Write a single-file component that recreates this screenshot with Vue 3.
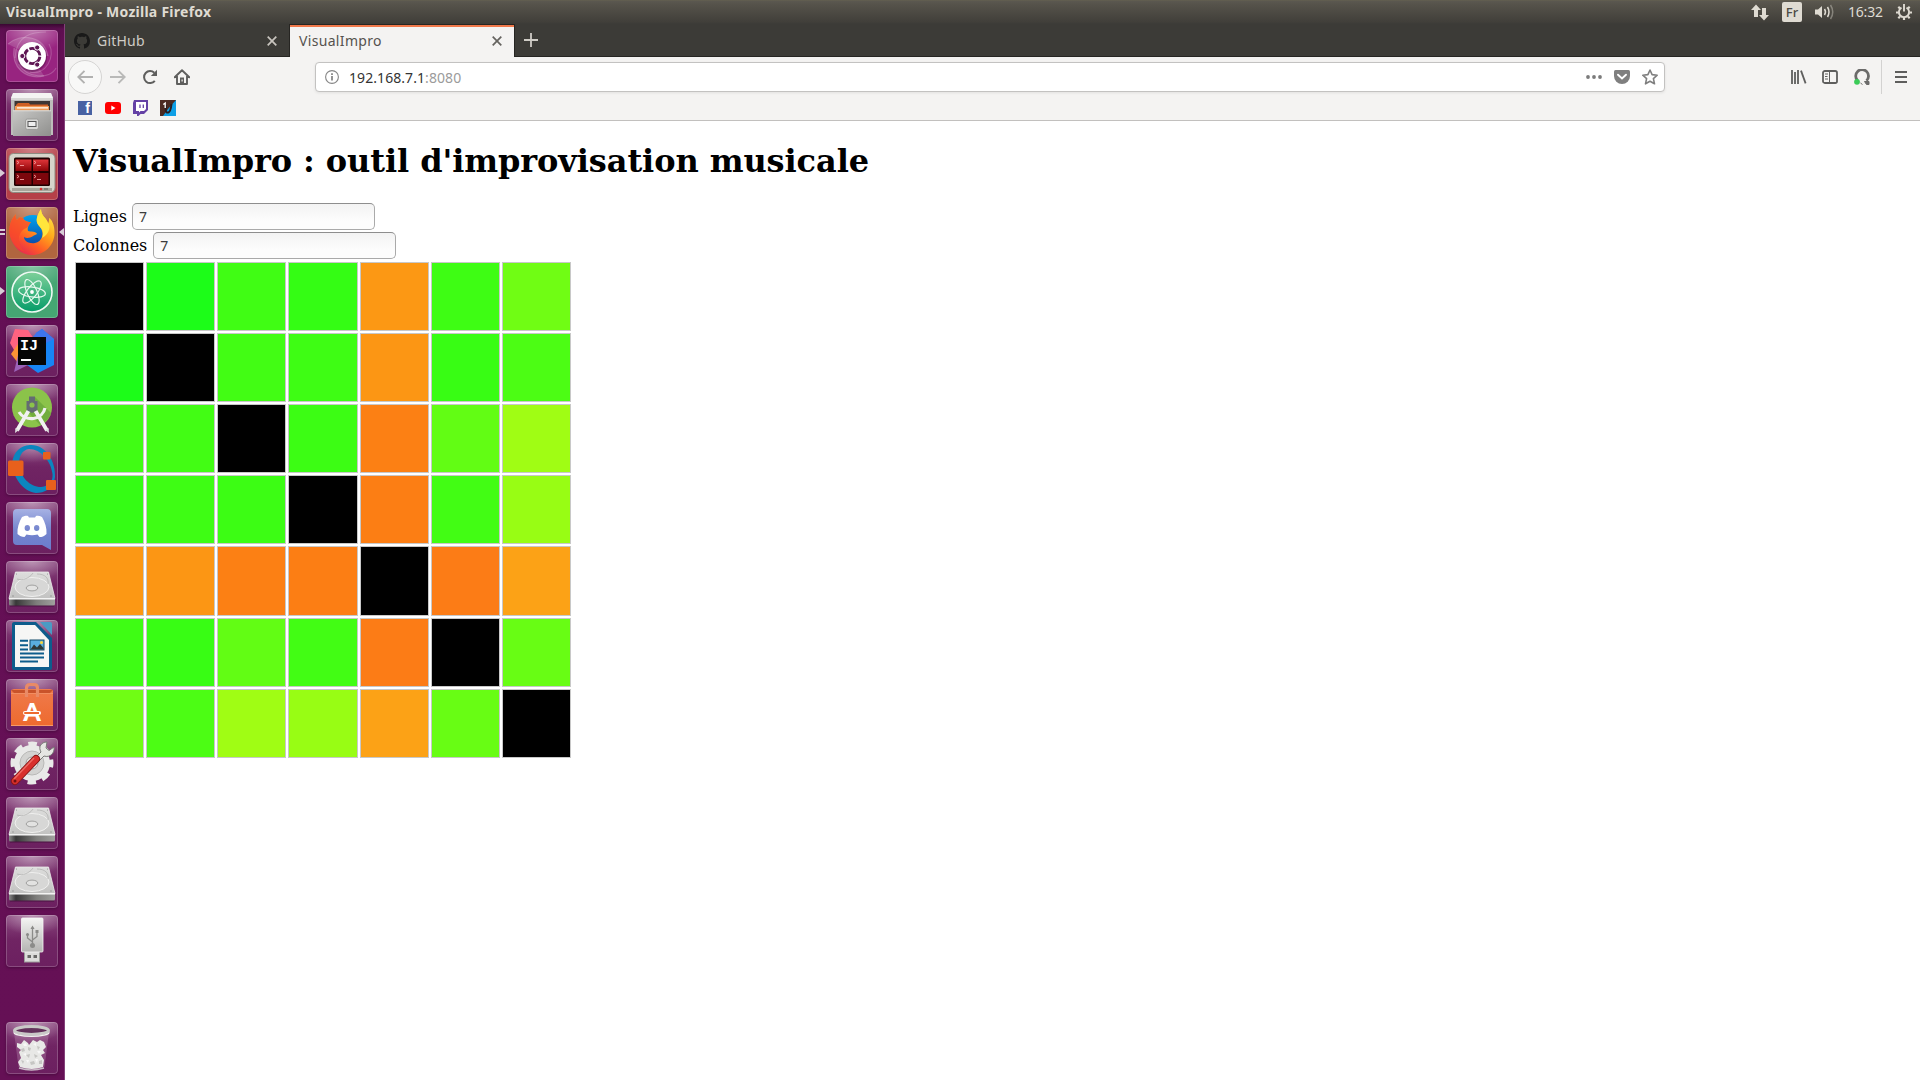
<script setup>
import { ref } from 'vue'

const rows = ref(7)
const cols = ref(7)

const k = '#000000'
const matrix = [
  [k, '#1cfd18', '#40fd14', '#34fd14', '#fc9814', '#3efd14', '#70fd14'],
  ['#1cfd18', k, '#42fd14', '#3efd14', '#fc9614', '#38fd14', '#4cfd14'],
  ['#40fd14', '#42fd14', k, '#3cfd14', '#fc8014', '#62fd14', '#a0fd14'],
  ['#34fd14', '#3efd14', '#3cfd14', k, '#fc7e14', '#42fd14', '#98fd14'],
  ['#fc9814', '#fc9614', '#fc8014', '#fc7e14', k, '#fc7c16', '#fca216'],
  ['#3efd14', '#38fd14', '#62fd14', '#42fd14', '#fc7c16', k, '#68fd14'],
  ['#70fd14', '#4cfd14', '#a0fd14', '#98fd14', '#fca216', '#68fd14', k],
]

const apps = [
  { icon: 'dash', tint: 'dash' },
  { icon: 'files', tint: 'plain' },
  { icon: 'terminal', tint: 'red', left: 1 },
  { icon: 'firefox', tint: 'orange', left: 2, active: true },
  { icon: 'atom', tint: 'green', left: 1 },
  { icon: 'idea', tint: 'plain', letters: 'IJ' },
  { icon: 'studio', tint: 'plain' },
  { icon: 'octave', tint: 'plain' },
  { icon: 'discord', tint: 'plain' },
  { icon: 'disk', tint: 'plain' },
  { icon: 'writer', tint: 'plain' },
  { icon: 'software', tint: 'plain', letters: 'A' },
  { icon: 'settings', tint: 'plain' },
  { icon: 'disk', tint: 'plain' },
  { icon: 'disk', tint: 'plain' },
  { icon: 'usb', tint: 'plain' },
  { icon: 'trash', tint: 'plain', last: true },
]
</script>

<template>
  <div class="desktop">
    <svg class="defs" width="0" height="0">
      <defs>
        <linearGradient id="gMetal" x1="0" y1="0" x2="0" y2="1"><stop offset="0" stop-color="#f4f4f3" /><stop offset="1" stop-color="#b4b4b2" /></linearGradient>
        <linearGradient id="gFront" x1="0" y1="0" x2="1" y2="1"><stop offset="0" stop-color="#c9c9c7" /><stop offset="1" stop-color="#8f8f8d" /></linearGradient>
        <linearGradient id="gScreen" x1="0" y1="0" x2="0" y2="1"><stop offset="0" stop-color="#e0363a" /><stop offset="1" stop-color="#8c0408" /></linearGradient>
        <linearGradient id="gFox" x1=".9" y1="0" x2=".2" y2="1"><stop offset="0" stop-color="#fff04a" /><stop offset=".4" stop-color="#ffa81a" /><stop offset=".7" stop-color="#ff5a26" /><stop offset="1" stop-color="#e0205a" /></linearGradient>
        <linearGradient id="gGlobe" x1="0" y1="0" x2="0" y2="1"><stop offset="0" stop-color="#00a4f0" /><stop offset="1" stop-color="#10389a" /></linearGradient>
        <linearGradient id="gAtom" x1="0" y1="0" x2="0" y2="1"><stop offset="0" stop-color="#7fd09a" /><stop offset="1" stop-color="#049c68" /></linearGradient>
        <linearGradient id="gDisk" x1="0" y1="0" x2="0" y2="1"><stop offset="0" stop-color="#dededd" /><stop offset="1" stop-color="#c2c2c1" /></linearGradient>
        <linearGradient id="gEdge" x1="0" y1="0" x2="1" y2="0"><stop offset="0" stop-color="#8a8a8a" /><stop offset=".15" stop-color="#383838" /><stop offset=".6" stop-color="#7e7e7c" /><stop offset="1" stop-color="#a0a09e" /></linearGradient>
        <linearGradient id="gDiscord" x1="0" y1="0" x2="0" y2="1"><stop offset="0" stop-color="#a7b2e4" /><stop offset=".5" stop-color="#7686ce" /><stop offset="1" stop-color="#6a7ccc" /></linearGradient>
        <linearGradient id="gBag" x1="0" y1="0" x2="0" y2="1"><stop offset="0" stop-color="#ef7a4c" /><stop offset="1" stop-color="#ee6a2e" /></linearGradient>
      </defs>

      <symbol id="dash" viewBox="0 0 52 52">
        <g fill="none" stroke="#fff" stroke-opacity=".2" stroke-width="1.1">
          <path d="M2 14C14 3 38 5 42 26" /><path d="M40 2C28 2 10 4 9 28" /><path d="M8 18C5 38 20 50 38 46" /><path d="M50 38C44 50 20 48 13 34" /><path d="M43 14C50 26 40 46 24 42" />
        </g>
        <path d="M2 14C14 3 38 5 42 26L26 26ZM8 18C5 38 20 50 38 46L26 26Z" fill="#fff" opacity=".14" />
        <circle cx="26" cy="27" r="15" fill="#3b0634" opacity=".35" />
        <circle cx="26" cy="26" r="14" fill="#fff" />
        <circle cx="26.3" cy="26" r="7.6" fill="none" stroke="#5e1653" stroke-width="2.9" stroke-dasharray="14.300 1.617" stroke-dashoffset="-.800" />
        <g fill="#5e1653" stroke="#fff" stroke-width="1"><circle cx="16.300" cy="26" r="2.600" /><circle cx="31.200" cy="17.500" r="2.600" /><circle cx="31.200" cy="34.600" r="2.600" /></g>
      </symbol>

      <symbol id="files" viewBox="0 0 52 52">
        <path d="M7 4H45L47 9V46H5V9Z" fill="#bdbdbb" />
        <path d="M7 4H45L47 9H5Z" fill="#f4f4f3" />
        <rect x="5" y="9" width="42" height="2" fill="#d8d8d6" />
        <rect x="8.500" y="12" width="35.500" height="12" fill="#3d3634" />
        <path d="M10 16L12 14H23L24 15.500H42V24H10Z" fill="#cf5f24" />
        <path d="M9 17H43V24H9Z" fill="#f09a55" /><path d="M11 18.300H42V19.600H11Z" fill="#fff" />
        <path d="M7 21.500H24L26 20.500L28 21.500H45V47H7Z" fill="url(#gFront)" />
        <path d="M7 21.800H45" stroke="#dededc" />
        <rect x="19.500" y="30" width="13" height="10.500" rx="2" fill="#d8d8d6" stroke="#949492" stroke-width=".8" />
        <rect x="22" y="32.500" width="8" height="5" fill="#eee" stroke="#555" />
      </symbol>

      <symbol id="terminal" viewBox="0 0 52 52">
        <rect x="3" y="5.500" width="46" height="39" rx="4.500" fill="#d6d4ca" stroke="#8d8a80" />
        <path d="M6 41.500H46" stroke="#a8a59b" stroke-width="3" />
        <rect x="8" y="9.500" width="36" height="28.500" rx="1.500" fill="#200002" />
        <g fill="url(#gScreen)"><rect x="9.500" y="11.500" width="16" height="11.500" /><rect x="27" y="11.500" width="15.500" height="11.500" /></g>
        <g fill="#7c060c"><rect x="9.500" y="25" width="16" height="11.500" /><rect x="27" y="25" width="15.500" height="11.500" /></g>
        <g fill="none" stroke="#f4a0a0" stroke-width=".9"><path d="M11 13l2 1.500-2 1.500M14 17.500h4M28 13l2 1.500-2 1.500M31 17.500h4M11 27l2 1.500-2 1.500M14 31.500h4M28 27l2 1.500-2 1.500M31 31.500h4" /></g>
        <circle cx="35" cy="41" r="1.300" fill="#e03030" /><path d="M38 41H42" stroke="#77746c" stroke-width="1.500" />
      </symbol>

      <symbol id="firefox" viewBox="0 0 52 52">
        <circle cx="27" cy="26" r="18" fill="url(#gGlobe)" />
        <path d="M35 2C30 10 29 15 34 20C39 26 36 35 29 36C23 37 18 34 18 30C23 33 28 28 31 27C30 24 25 25 22 24C21 20 23 18 25 15C20 15 18 13 17 11C13 9 12 12 11 13C10 12 9 10 10 7C5 12 2 20 4 29C7 40 15 48 26 48C39 48 48 38 48.500 27C49 17 45 12 43 11C43 14 43 15 42 16C40 10 35 9 35 2Z" fill="url(#gFox)" />
        <path d="M35 2C30 10 29 15 34 20C37 23 38 27 36 31C44 27 45 18 42 16C40 10 35 9 35 2Z" fill="#ffe53c" />
        <path d="M10 7C5 12 2 20 4 29C7 38 13 43 19 45C12 38 10 28 18 22C22 21 23 18 25 15C20 15 18 13 17 11C13 9 12 12 11 13C10 12 9 10 10 7Z" fill="#f5472c" opacity=".75" />
      </symbol>

      <symbol id="atom" viewBox="0 0 52 52">
        <circle cx="26" cy="26" r="20" fill="url(#gAtom)" stroke="#f0faf4" stroke-width="1.600" />
        <g fill="none" stroke="#e6f8ee" stroke-width="1.200"><ellipse cx="26" cy="26" rx="5" ry="13.500" transform="rotate(-24 26 26)" /><ellipse cx="26" cy="26" rx="5" ry="13.500" transform="rotate(38 26 26)" /><ellipse cx="26" cy="26" rx="5" ry="13.500" transform="rotate(98 26 26)" /></g>
        <circle cx="26" cy="26" r="1.900" fill="#fff" />
      </symbol>

      <symbol id="idea" viewBox="0 0 52 52">
        <path d="M9 4L22 5L28 14L12 32L4 18Z" fill="#fe6380" />
        <path d="M5 29L12 19V38Z" fill="#fc9435" />
        <path d="M12 30L26 38L8 47Z" fill="#9b62b8" />
        <path d="M30 8L36 4L48 14V40L32 48L21 40L40 12Z" fill="#1785f5" />
        <path d="M30 8L36 4L48 14L40 18L27 12Z" fill="#3e75ec" />
        <rect x="12" y="12" width="28" height="28" fill="#060606" />
        <rect x="15" y="34" width="10" height="2" fill="#fff" />
      </symbol>

      <symbol id="studio" viewBox="0 0 52 52">
        <circle cx="26" cy="23.500" r="20" fill="#8bc34a" />
        <path d="M29 13L45 29A20 20 0 0 1 34 41L22 28Z" fill="#5f9b34" opacity=".55" />
        <g fill="none" stroke="#f1f1f1" stroke-linecap="butt"><path d="M23 26L11 46.500M29 26L41 46.500" stroke-width="3.800" /><path d="M13 28A14 13 0 0 0 39 24" stroke-width="3.200" /></g>
        <path d="M9.500 44L9 49L13 46ZM42.500 44L43 49L39 46Z" fill="#ddd" />
        <path d="M23 12.500H29V17H31.500V26L26 29L20.500 26V17H23Z" fill="#646c72" />
        <circle cx="26" cy="21" r="2.600" fill="#8bc34a" />
      </symbol>

      <symbol id="octave" viewBox="0 0 52 52">
        <path fill-rule="evenodd" d="M24 2C39 1 50 18 49 34C48 46 38 50 30 50C16 48 7 34 6 20C8 8 14 3 24 2ZM23 6C16 7 13 13 13 21C14 34 24 44 35 44C44 43 47 38 46.500 31C45 18 35 6 23 6Z" fill="#0b85bf" />
        <g fill="#e8601c"><rect x="2" y="17.500" width="15.500" height="15.500" rx="1.500" /><rect x="37" y="9" width="7.500" height="7.500" rx="1" /><rect x="40" y="37" width="10" height="10" rx="1" /></g>
      </symbol>

      <symbol id="discord" viewBox="0 0 52 52">
        <path d="M11 7H41A4 4 0 0 1 45 11V48L36 43H11A4 4 0 0 1 7 39V11A4 4 0 0 1 11 7Z" fill="url(#gDiscord)" />
        <path fill-rule="evenodd" d="M16 15C19 13.500 21 13.500 22 14L23 15.500H29L30 14C32 13.500 34 14 36 15C39 20 41 26 40.500 32C38 34.500 36 35 33.500 35L31.500 32.500C28 33.500 24 33.500 20.500 32.500L18.500 35C16 35 13.500 34 11.500 32C11 26 13 20 16 15ZM21.300 23A2.600 2.900 0 1 0 21.300 29A2.600 2.900 0 1 0 21.300 23ZM30.700 23A2.600 2.900 0 1 0 30.700 29A2.600 2.900 0 1 0 30.700 23Z" fill="#fff" />
      </symbol>

      <symbol id="disk" viewBox="0 0 52 52">
        <path d="M4 44.500H48" stroke="#35082f" stroke-width="2" opacity=".6" />
        <path d="M3 37H49V43Q49 44.500 47.500 44.500H4.500Q3 44.500 3 43Z" fill="url(#gEdge)" />
        <path d="M9.500 11H42.500L49 37.500H3Z" fill="url(#gDisk)" stroke="#ececeb" stroke-width=".8" />
        <path d="M3 37.800H49" stroke="#fafafa" stroke-width="1.200" />
        <ellipse cx="26" cy="26" rx="17" ry="9.500" fill="#d7d7d6" stroke="#f0f0ef" stroke-width="1" />
        <path d="M11 18C16 20 24 17 27 12M31 13C39 13 43 17 42 23" fill="none" stroke="#b4b4b3" stroke-width=".8" />
        <ellipse cx="26" cy="27" rx="5.800" ry="2.900" fill="#e2e2e1" stroke="#9a9a99" stroke-width=".9" />
        <g fill="#8f8f8e"><circle cx="10.500" cy="13" r=".6" /><circle cx="41.500" cy="13" r=".6" /><circle cx="7" cy="35" r=".7" /><circle cx="45" cy="35" r=".7" /></g>
      </symbol>

      <symbol id="writer" viewBox="0 0 52 52">
        <path d="M8 2H30L46 18V48Q46 50 44 50H8Q6 50 6 48V4Q6 2 8 2Z" fill="#0d5c8c" />
        <path d="M34 2H44Q46 2 46 4V15Z" fill="#4b9bc4" />
        <path d="M9 5H29L43 20V47H9Z" fill="#f6f6f5" />
        <path d="M14 20.800H22M14 25.200H22M14 29.600H22M14 33.500H38M14 37.500H38M14 41.500H32" stroke="#0d5c8c" stroke-width="2" />
        <rect x="24" y="20" width="14" height="10" fill="#5aaede" stroke="#124a6b" /><path d="M24.500 29.500L28 24.500L31 27.500L34 24L37.500 28V29.500Z" fill="#2f3a36" /><circle cx="35.500" cy="22.500" r="1.500" fill="#f5d53d" />
      </symbol>

      <symbol id="software" viewBox="0 0 52 52">
        <path d="M5 11L8 10H44L47 11V47H5Z" fill="url(#gBag)" />
        <path d="M5 11H47L44 14H8Z" fill="#c9532a" /><path d="M5 14.500H47" stroke="#f39468" stroke-width=".8" />
        <path d="M20.500 18V9Q20.500 5.500 24 5.500H28Q31.500 5.500 31.500 9V18" fill="none" stroke="#e98a66" stroke-width="3.200" />
        <path d="M5 46.500H47" stroke="#f79a66" />
      </symbol>

      <symbol id="settings" viewBox="0 0 52 52">
        <circle cx="26" cy="25" r="19" fill="none" stroke="#e9e9e8" stroke-width="5" stroke-dasharray="8.500 6.423" stroke-dashoffset="4.250" />
        <circle cx="26" cy="25" r="18" fill="#e9e9e8" /><circle cx="26" cy="25" r="12" fill="#d3d3d1" stroke="#b9b9b7" /><circle cx="26" cy="25" r="6" fill="#e4e4e2" stroke="#a0a09e" />
        <path d="M25 24L35 14C32 9 35 4 41 4L40 10L43 12.500L48 9C49 15 44 20 38 18L28 28Z" fill="#e6e6e3" stroke="#787876" />
        <path d="M9 43L30 21" stroke="#871616" stroke-width="8" stroke-linecap="round" /><path d="M9 43L30 21" stroke="#d8302c" stroke-width="6.200" stroke-linecap="round" /><path d="M8 41L28 20" stroke="#ee6a62" stroke-width="1.500" />
        <circle cx="9" cy="43" r="1.500" fill="#701010" />
      </symbol>

      <symbol id="usb" viewBox="0 0 52 52">
        <rect x="18.500" y="36" width="15" height="11" fill="#dcdcda" stroke="#9d9d9b" /><path d="M21.500 40h3.500v3h-3.500zM27.500 40h3.500v3h-3.500z" fill="#686866" />
        <rect x="15.500" y="3" width="21.500" height="34" rx="1" fill="url(#gMetal)" stroke="#f6f6f5" stroke-width=".8" />
        <g fill="none" stroke="#8b8b89" stroke-width="1.300"><path d="M26.500 31V12M26.500 27L21.500 23V20M26.500 25L31 21.500V17" /></g>
        <g fill="#8b8b89"><circle cx="26.500" cy="30.500" r="2.500" /><circle cx="21.500" cy="19.500" r="1.500" /><rect x="29.500" y="15" width="3" height="3" /><path d="M24.500 14L26.500 10.500L28.500 14Z" /></g>
      </symbol>

      <symbol id="trash" viewBox="0 0 52 52">
        <path d="M8 10L12.500 45Q25.500 50 38.500 45L43 10Z" fill="#d6b6d0" opacity=".25" />
        <path d="M11 21L15 22L18 18L22 21L23 23L27 18L31 20L34 18L38 20L40 25L37 28L39 31L35 33L38 38L37 45Q26 49 14 45L12 40L15 36L13 30L15 28L11 25Z" fill="#e8e8e6" />
        <g fill="#c6c6c3"><path d="M15 27l3-1 1 3-3 1zM22 25l3 1-1 3-2-1zM31 24l3 1-2 3zM20 33l4-1-1 4zM28 32l4 2-3 2zM15 38l3 1-1 3zM24 40l4-1 1 3-4 1zM33 39l3-1 0 4-3 0z" /></g>
        <g fill="#f8f8f7"><path d="M17 22l3-1 1 3-3 0zM27 22l3-1 0 3zM17 32l3-1 0 3zM31 29l4 0-2 3zM20 38l3 0-1 3zM29 37l3 0-1 4z" /></g>
        <ellipse cx="25.500" cy="8.500" rx="17" ry="4" fill="#3c0b36" fill-opacity=".6" stroke="#c9c9c7" stroke-width="3" />
        <path d="M7.500 9A18 5 0 0 0 43.500 9V11A18 4 0 0 1 7.500 11Z" fill="#f2f2f0" />
        <path d="M13 46Q25.500 50 38 46" fill="none" stroke="#c9b9c6" stroke-width="1.500" />
      </symbol>
    </svg>

    <header class="panel">
      <span class="window-title">VisualImpro - Mozilla Firefox</span>
      <div class="indicators">
        <svg class="net" width="18" height="17" viewBox="0 0 18 17"><path d="M5 0.500L10 6H7V13H3V6H0ZM13 16.500L8 11H11V4H15V11H18Z" fill="#dfdbd2" /></svg>
        <span class="lang">Fr</span>
        <svg class="vol" width="20" height="16" viewBox="0 0 20 16"><path d="M0 5.500H3L7 2V14L3 10.500H0Z" fill="#dfdbd2" /><g fill="none" stroke="#dfdbd2" stroke-width="1.500"><path d="M9.500 5Q11.500 8 9.500 11" /><path d="M12.500 3Q15.500 8 12.500 13" /><path d="M15.500 1Q20 8 15.500 15" opacity=".4" /></g></svg>
        <span class="clock">16:32</span>
        <svg class="cog" width="16" height="16" viewBox="0 0 16 16" fill="none" stroke="#dfdbd2"><path d="M5.500 3.600A5.100 5.100 0 1 0 10.500 3.600" stroke-width="1.900" /><path d="M8 0V7.500" stroke-width="1.900" /><path d="M0 8.500H2.500M13.500 8.500H16M8 13.500V16M2.300 2.800L4 4.500M13.700 2.800L12 4.500M2.300 14.200L4 12.500M13.700 14.200L12 12.500" stroke-width="2.200" /></svg>
      </div>
    </header>

    <div class="workspace">
      <aside class="launcher">
        <div v-for="(app, i) in apps" :key="i" class="slot" :class="{ last: app.last }">
          <div class="tile" :class="app.tint"><svg width="52" height="52"><use :href="'#' + app.icon" /></svg></div>
          <span v-if="app.letters" class="letters" :class="app.icon">{{ app.letters }}</span>
          <span v-if="app.left === 1" class="pip"></span>
          <span v-if="app.left === 2" class="pips"></span>
          <span v-if="app.active" class="arrow"></span>
        </div>
      </aside>

      <div class="browser">
        <div class="tabs">
          <div class="tab">
            <svg width="16" height="16" viewBox="0 0 16 16"><path fill="#191919" d="M8 0C3.580 0 0 3.580 0 8c0 3.540 2.290 6.530 5.470 7.590.4.070.55-.17.55-.38 0-.19-.01-.82-.01-1.490-2.010.37-2.530-.49-2.690-.94-.09-.23-.48-.94-.82-1.130-.28-.15-.68-.52-.01-.53.63-.01 1.080.58 1.230.82.72 1.210 1.870.87 2.330.66.07-.52.28-.87.51-1.070-1.780-.2-3.640-.89-3.640-3.950 0-.87.31-1.590.82-2.150-.08-.2-.36-1.020.08-2.120 0 0 .67-.21 2.200.82.64-.18 1.320-.27 2-.27s1.360.09 2 .27c1.530-1.040 2.200-.82 2.200-.82.44 1.100.16 1.920.08 2.120.51.56.82 1.270.82 2.150 0 3.070-1.870 3.750-3.650 3.950.29.25.54.73.54 1.480 0 1.070-.01 1.930-.01 2.200 0 .21.15.46.55.38A8.010 8.010 0 0 0 16 8c0-4.420-3.580-8-8-8z" /></svg>
            <span class="label github">GitHub</span>
            <svg class="close" width="10" height="10" viewBox="0 0 10 10"><path d="M.7.700L9.300 9.300M9.300.700L.7 9.300" stroke="#c9c5bf" stroke-width="1.700" /></svg>
          </div>
          <div class="tab active">
            <span class="label">VisualImpro</span>
            <svg class="close" width="10" height="10" viewBox="0 0 10 10"><path d="M.7.700L9.300 9.300M9.300.700L.7 9.300" stroke="#65635f" stroke-width="1.700" /></svg>
          </div>
          <svg class="plus" width="14" height="14" viewBox="0 0 14 14"><path d="M7 0V14M0 7H14" stroke="#cfccc6" stroke-width="1.800" /></svg>
        </div>

        <div class="nav">
          <span class="back"><svg width="16" height="14" viewBox="0 0 16 14"><path d="M16 7H1.500M7.500 .8L1.300 7L7.500 13.200" fill="none" stroke="#b1b1b0" stroke-width="1.900" /></svg></span>
          <svg class="fwd" width="16" height="14" viewBox="0 0 16 14"><path d="M0 7H14.500M8.500 .8L14.700 7L8.500 13.200" fill="none" stroke="#b9b9b8" stroke-width="1.900" /></svg>
          <svg class="reload" width="16" height="16" viewBox="0 0 16 16"><path d="M12.800 11.800A6 6 0 1 1 12.300 3.800" fill="none" stroke="#5e5e5d" stroke-width="2" /><path d="M15 .8V7H8.800Z" fill="#5e5e5d" /></svg>
          <svg class="home" width="16" height="16" viewBox="0 0 16 16"><path d="M.7 8.300L8 1.200L15.300 8.300M3 7V15H13V7" fill="none" stroke="#5e5e5d" stroke-width="1.900" stroke-linejoin="round" stroke-linecap="round" /><path d="M6 15V8.500H10V15Z" fill="#5e5e5d" /><rect x="7.500" y="10.500" width="1.200" height="2" fill="#f5f4f2" /></svg>
          <div class="urlbar">
            <svg width="14" height="14" viewBox="0 0 14 14"><circle cx="7" cy="7" r="6.400" fill="none" stroke="#858585" stroke-width="1.100" /><path d="M7 6V10.500M7 3.200V4.900" stroke="#6f6f6f" stroke-width="1.500" /></svg>
            <span class="url"><span class="host">192.168.7.1</span><span class="port">:8080</span></span>
            <svg class="dots" width="16" height="4" viewBox="0 0 16 4" fill="#7b7b7b"><circle cx="2" cy="2" r="1.900" /><circle cx="8" cy="2" r="1.900" /><circle cx="14" cy="2" r="1.900" /></svg>
            <svg class="pocket" width="16" height="14" viewBox="0 0 16 14"><path d="M1.500 0H14.500Q16 0 16 1.500V6A8 8 0 0 1 0 6V1.500Q0 0 1.500 0Z" fill="#7f7f7f" /><path d="M4 4.700L8 8.500L12 4.700" fill="none" stroke="#fff" stroke-width="1.900" stroke-linecap="round" /></svg>
            <svg class="star" width="16" height="16" viewBox="0 0 16 16"><path d="M8 1L10.100 5.600L15.200 6.200L11.400 9.600L12.500 14.800L8 12.200L3.500 14.800L4.600 9.600L.8 6.200L5.900 5.600Z" fill="none" stroke="#7f7f7f" stroke-width="1.600" stroke-linejoin="round" /></svg>
          </div>
          <svg class="library" width="16" height="14" viewBox="0 0 16 14"><path d="M1 0V14M4 2V14M7 0V14" stroke="#5e5e5d" stroke-width="1.800" /><path d="M10 .6L14.600 13.400" stroke="#5e5e5d" stroke-width="1.800" /></svg>
          <svg class="sidebar" width="16" height="14" viewBox="0 0 16 14" fill="none" stroke="#5e5e5d"><rect x="1" y="1" width="14" height="12" rx="1.800" stroke-width="1.800" /><path d="M7.500 1V13M3 4H6M3 6.500H5.500M3 9H6" stroke-width="1" /></svg>
          <svg class="ghost" width="16" height="16" viewBox="0 0 16 16"><path d="M3.500 11.500A6.400 6.400 0 1 1 12.500 11.700" fill="none" stroke="#6b6b6a" stroke-width="2.800" /><path d="M6.500 14L8.500 15.500M10.500 12.500H15V15.500H12.500Z" stroke="#6b6b6a" fill="#6b6b6a" stroke-width="1" /><circle cx="3" cy="12.800" r="2.900" fill="#3bcb58" /></svg>
          <span class="divider"></span>
          <svg class="menu" width="12" height="12" viewBox="0 0 12 12"><path d="M0 1H12M0 6H12M0 11H12" stroke="#5e5e5d" stroke-width="1.900" /></svg>
        </div>

        <div class="bookmarks">
          <span class="fb">f</span>
          <svg width="16" height="12" viewBox="0 0 16 12"><rect width="16" height="12" rx="3" fill="#f00" /><path d="M6.300 3.500L10.500 6L6.300 8.500Z" fill="#fff" /></svg>
          <svg class="twitch" width="15" height="16" viewBox="0 0 15 16"><path d="M1 0H15V10L11 14H7.500L5.500 16H4V14H0V3Z" fill="#6441a5" /><path d="M3 2H13V9L11 11H7.500L6 12.500V11H3Z" fill="#fff" /><path d="M7 4.500V8M10.300 4.500V8" stroke="#6441a5" stroke-width="1.300" /></svg>
          <svg width="16" height="16" viewBox="0 0 16 16"><rect width="16" height="16" fill="#4b2a22" /><path d="M16 0V16H3L8 9Z" fill="#0e9fe6" /><path d="M5.800 5V10.500Q6 13 8.300 12.500Q10.600 12 11.500 4" fill="none" stroke="#2a1d20" stroke-width="2" /><path d="M3.300 4.500L5.200 3V8" fill="none" stroke="#fff" stroke-width="1.300" /></svg>
        </div>

        <main class="page">
          <h1>VisualImpro : outil d'improvisation musicale</h1>
          <div class="field"><label for="rows">Lignes</label><input id="rows" v-model="rows" type="text" /></div>
          <div class="field"><label class="tight" for="cols">Colonnes</label><input id="cols" v-model="cols" type="text" /></div>
          <div class="matrix">
            <template v-for="(line, r) in matrix" :key="r">
              <div v-for="(color, c) in line" :key="c" class="cell" :style="{ backgroundColor: color }"></div>
            </template>
          </div>
        </main>
      </div>
    </div>
  </div>
</template>

<style>
body { margin: 0; overflow: hidden; }
</style>

<style scoped>
.desktop { width: 1920px; height: 1080px; display: flex; flex-direction: column; overflow: hidden; background: #fff; font-family: "Noto Sans", sans-serif; }
.defs { position: absolute; }
svg { display: block; flex: none; }

.panel { height: 24px; flex: none; display: flex; align-items: center; justify-content: space-between; background: linear-gradient(#66624f 0, #5b5850 1px, #55524a 5px, #413f3a 22px, #3c3b37); color: #dfdbd2; }
.window-title { margin-left: 6px; font-weight: 700; font-size: 14px; line-height: 24px; letter-spacing: .26px; white-space: nowrap; }
.indicators { display: flex; align-items: center; margin-right: 8px; }
.lang { width: 20px; height: 20px; margin: 0 13px; border-radius: 2px; background: #dfdbd2; color: #4c4a44; font-size: 13px; font-weight: 500; line-height: 20px; text-align: center; }
.clock { width: 35px; margin: 0 13px; font-size: 14px; line-height: 24px; letter-spacing: -.2px; white-space: nowrap; }

.workspace { flex: 1; display: flex; min-height: 0; }
.launcher { width: 64px; flex: none; display: flex; flex-direction: column; padding-top: 6px; background: linear-gradient(#3a0832 0, #5d0f50 5px, #640f55 20px, #651055); border-right: 1px solid #84417a; }
.slot { position: relative; height: 52px; flex: none; margin-bottom: 7px; padding-left: 6px; }
.slot.last { margin-top: 48px; }
.tile { width: 52px; height: 52px; box-sizing: border-box; border-radius: 4px; overflow: hidden; box-shadow: inset 0 0 0 1px rgba(255, 255, 255, .2), 0 1px 3px rgba(30, 0, 25, .35); }
.plain { background: radial-gradient(ellipse 34px 20px at 50% 0, rgba(255, 255, 255, .42), rgba(255, 255, 255, 0)), linear-gradient(#8b4a80 0, #702463 24px, #6c2060 52px); }
.dash { background: radial-gradient(ellipse 36px 22px at 50% 0, rgba(255, 255, 255, .4), rgba(255, 255, 255, 0)), #982480; }
.red { background: radial-gradient(ellipse 36px 22px at 50% 0, rgba(255, 255, 255, .35), rgba(255, 255, 255, 0)), #b54048; }
.orange { background: radial-gradient(ellipse 36px 22px at 50% 0, rgba(255, 255, 255, .35), rgba(255, 255, 255, 0)), #b0653f; }
.green { background: radial-gradient(ellipse 36px 22px at 50% 0, rgba(255, 255, 255, .35), rgba(255, 255, 255, 0)), #45a673; }
.letters { position: absolute; color: #fff; white-space: nowrap; }
.letters.idea { left: 20px; top: 13px; font: 700 15px/17px "Liberation Mono", monospace; }
.letters.software { left: 18px; width: 28px; top: 18px; text-align: center; font: 900 25px/28px Lato, sans-serif; }
.letters.software::after { content: ""; position: absolute; left: 5px; top: 14px; width: 15px; height: 2px; border: solid #fff; border-width: 1px 2px 1px 1px; border-radius: 2px; background: #ee6a2e; }
.pip { position: absolute; left: 0; top: 21px; border: solid transparent; border-width: 4.5px 0 4.5px 5px; border-left-color: #d8ccd6; }
.pips { position: absolute; left: 0; top: 22px; width: 5px; height: 2px; border: solid #d8ccd6; border-width: 2px 0; }
.arrow { position: absolute; right: 0; top: 21px; border: solid transparent; border-width: 4.5px 5px 4.5px 0; border-right-color: #d8ccd6; }

.browser { flex: 1; min-width: 0; display: flex; flex-direction: column; background: #f4f3f2; }
.tabs { height: 33px; flex: none; box-sizing: border-box; display: flex; background: #3c3b37; box-shadow: inset 0 -1px #262522; }
.tab { width: 224px; height: 33px; box-sizing: border-box; display: flex; align-items: center; padding: 0 12px 0 9px; color: #cfccc6; font-size: 14px; }
.tab .label { line-height: 20px; letter-spacing: .33px; }
.tab .github { margin-left: 7px; letter-spacing: .2px; }
.tab .close { margin-left: auto; }
.tab.active { width: 226px; background: linear-gradient(#262522 1px, #f0784a 1px, #f0784a 3px, #f4f3f2 3px); border: solid #262522; border-width: 0 1px; color: #54524e; }
.plus { margin: 9px 0 0 9px; }

.nav { height: 40px; flex: none; display: flex; align-items: center; }
.back { width: 34px; height: 34px; margin-left: 3px; box-sizing: border-box; display: flex; align-items: center; justify-content: center; border: 1px solid #d5d4d3; border-radius: 50%; background: #f8f8f7; }
.fwd { margin-left: 8px; }
.reload { margin-left: 16px; }
.home { margin-left: 16px; }
.urlbar { width: 1350px; height: 30px; margin-left: 125px; box-sizing: border-box; display: flex; align-items: center; padding: 0 6px 0 9px; border: 1px solid #c3c2c1; border-radius: 4px; background: #fff; box-shadow: 0 1px 3px rgba(0, 0, 0, .08); }
.url { margin-left: 10px; padding-top: 1px; font-size: 14px; line-height: 20px; letter-spacing: .07px; color: #333; white-space: nowrap; }
.port { color: #9b9b9b; }
.dots { margin-left: auto; }
.pocket, .star { margin-left: 12px; }
.library { margin-left: 126px; }
.sidebar { margin-left: 15px; }
.ghost { margin-left: 16px; }
.divider { width: 1px; height: 34px; margin-left: 11px; background: #d3d2d1; }
.menu { margin-left: 13px; }

.bookmarks { height: 24px; flex: none; box-sizing: border-box; display: flex; align-items: center; gap: 13px; padding: 0 0 2px 13px; border-bottom: 1px solid #c2c0be; }
.fb { width: 14px; height: 14px; box-sizing: border-box; padding-right: 2px; background: #4862a3; color: #fff; text-align: right; font: 700 14px/15px "Liberation Sans", sans-serif; }
.twitch { margin: 0 -1px; }

.page { flex: 1; padding: 21px 8px 0; background: #fff; color: #000; font-family: "DejaVu Serif", serif; font-size: 16px; }
.page h1 { margin: 0 0 23px; font-size: 32px; line-height: 38px; font-weight: 700; letter-spacing: -.09px; white-space: nowrap; }
.field { height: 29px; display: flex; align-items: flex-start; }
.field label { line-height: 28px; }
.field .tight { letter-spacing: -.1px; }
.field .tight + input { margin-left: 6px; }
.field input { width: 243px; height: 27px; margin: 0 0 0 5px; padding: 0 6px; box-sizing: border-box; border: 1px solid #aaa; border-top-color: #8e8e8e; border-radius: 5px; background: linear-gradient(#f3f3f3, #fdfdfd 70%); color: #3c3c3c; font: 14px "Noto Sans", sans-serif; outline: none; }
.matrix { display: grid; grid-template-columns: 69px 69px 69px 70px 69px 69px 69px; grid-template-rows: 69px 69px 69px 69px 70px 69px 69px; gap: 2px; margin: 1px 0 0 2px; }
.cell { border: 1px solid #c8c8c8; }
</style>
